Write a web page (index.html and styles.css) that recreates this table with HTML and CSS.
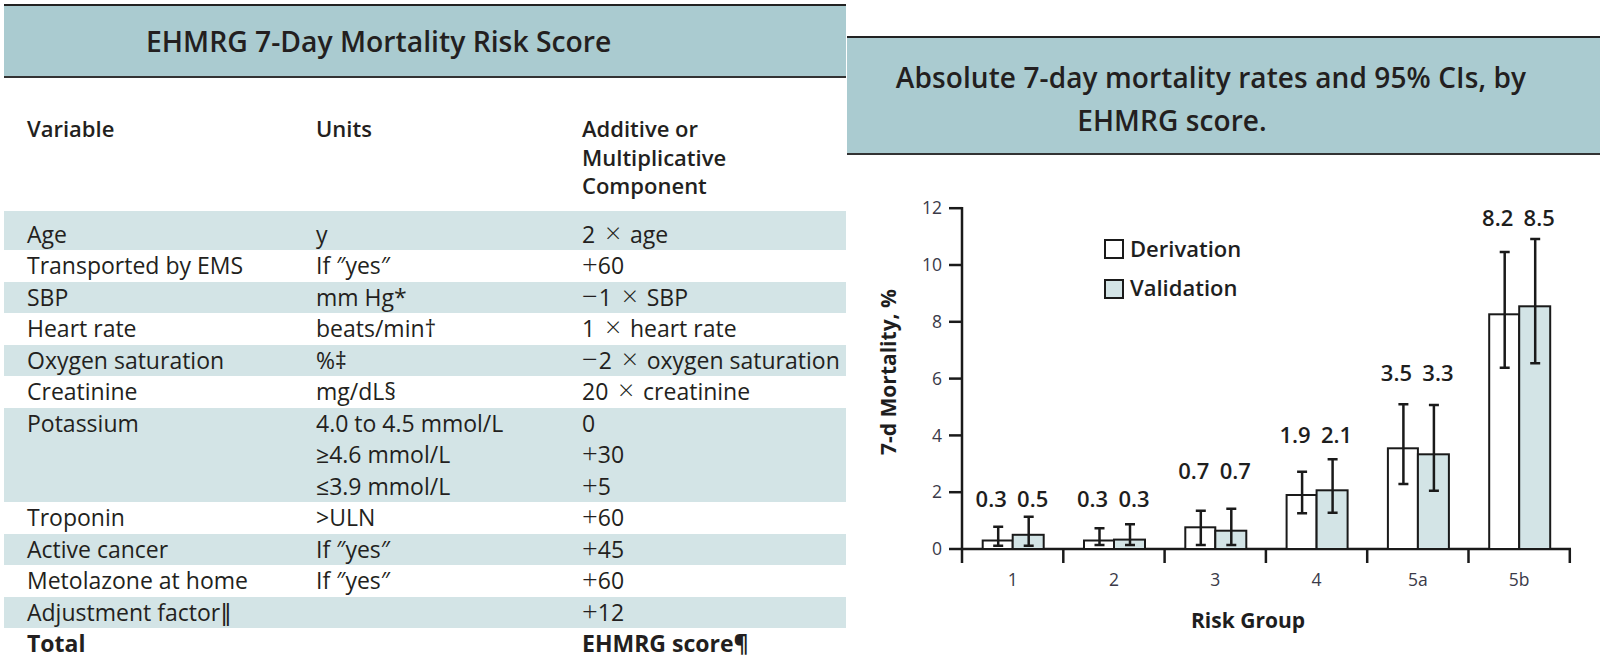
FILE: index.html
```html
<!DOCTYPE html>
<html lang="en">
<head>
<meta charset="utf-8">
<title>EHMRG 7-Day Mortality Risk Score</title>
<link rel="stylesheet" href="styles.css">
</head>
<body>
<div class="page">
  <section class="score">
    <h1 class="score-title">EHMRG 7-Day Mortality Risk Score</h1>
    <div class="row head"><div>Variable</div><div>Units</div><div>Additive or<br>Multiplicative<br>Component</div></div>
    <div class="row alt first"><div>Age</div><div>y</div><div>2<span class="op x">×</span>age</div></div>
    <div class="row"><div>Transported by EMS</div><div>If ″yes″</div><div><span class="op">+</span>60</div></div>
    <div class="row alt"><div>SBP</div><div>mm Hg*</div><div><span class="op m">−</span>1<span class="op x">×</span>SBP</div></div>
    <div class="row"><div>Heart rate</div><div>beats/min†</div><div>1<span class="op x">×</span>heart rate</div></div>
    <div class="row alt"><div>Oxygen saturation</div><div>%‡</div><div><span class="op m">−</span>2<span class="op x">×</span>oxygen saturation</div></div>
    <div class="row"><div>Creatinine</div><div>mg/dL§</div><div>20<span class="op x">×</span>creatinine</div></div>
    <div class="row alt"><div>Potassium</div><div>4.0 to 4.5 mmol/L<br>≥4.6 mmol/L<br>≤3.9 mmol/L</div><div>0<br><span class="op">+</span>30<br><span class="op">+</span>5</div></div>
    <div class="row"><div>Troponin</div><div>&gt;ULN</div><div><span class="op">+</span>60</div></div>
    <div class="row alt"><div>Active cancer</div><div>If ″yes″</div><div><span class="op">+</span>45</div></div>
    <div class="row"><div>Metolazone at home</div><div>If ″yes″</div><div><span class="op">+</span>60</div></div>
    <div class="row alt"><div>Adjustment factor‖</div><div></div><div><span class="op">+</span>12</div></div>
    <div class="row total"><div>Total</div><div></div><div>EHMRG score¶</div></div>
  </section>

  <section class="chart-panel">
    <h2 class="chart-title"><span class="l1">Absolute 7-day mortality rates and 95% CIs, by</span><span class="l2">EHMRG score.</span></h2>
    <svg class="chart" width="753" height="512" viewBox="847 155 753 512" xmlns="http://www.w3.org/2000/svg">
      <g class="axis">
        <line x1="962" y1="207" x2="962" y2="563"/>
        <line x1="961" y1="549" x2="1571" y2="549"/>
        <line x1="949" y1="549" x2="962" y2="549"/>
        <line x1="949" y1="492.2" x2="962" y2="492.2"/>
        <line x1="949" y1="435.4" x2="962" y2="435.4"/>
        <line x1="949" y1="378.6" x2="962" y2="378.6"/>
        <line x1="949" y1="321.8" x2="962" y2="321.8"/>
        <line x1="949" y1="265" x2="962" y2="265"/>
        <line x1="949" y1="208.2" x2="962" y2="208.2"/>
        <line x1="1063.3" y1="549" x2="1063.3" y2="563"/>
        <line x1="1164.6" y1="549" x2="1164.6" y2="563"/>
        <line x1="1265.9" y1="549" x2="1265.9" y2="563"/>
        <line x1="1367.2" y1="549" x2="1367.2" y2="563"/>
        <line x1="1468.5" y1="549" x2="1468.5" y2="563"/>
        <line x1="1569.8" y1="549" x2="1569.8" y2="563"/>
      </g>
      <g class="tick" text-anchor="end">
        <text x="942" y="555.2">0</text>
        <text x="942" y="498.4">2</text>
        <text x="942" y="441.6">4</text>
        <text x="942" y="384.8">6</text>
        <text x="942" y="328">8</text>
        <text x="942" y="271.2">10</text>
        <text x="942" y="214.4">12</text>
      </g>
      <g class="tick" text-anchor="middle">
        <text x="1012.7" y="586">1</text>
        <text x="1114" y="586">2</text>
        <text x="1215.3" y="586">3</text>
        <text x="1316.6" y="586">4</text>
        <text x="1417.9" y="586">5a</text>
        <text x="1519.2" y="586">5b</text>
      </g>

      <g class="bars">
        <rect class="d" x="982.7" y="540.5" width="30" height="8.5"/>
        <rect class="v" x="1012.7" y="534.8" width="31" height="14.2"/>
        <rect class="d" x="1084" y="540.5" width="30" height="8.5"/>
        <rect class="v" x="1114" y="539.6" width="31" height="9.4"/>
        <rect class="d" x="1185.3" y="527.3" width="30" height="21.7"/>
        <rect class="v" x="1215.3" y="530.7" width="31" height="18.3"/>
        <rect class="d" x="1286.6" y="495" width="30" height="54"/>
        <rect class="v" x="1316.6" y="490.3" width="31" height="58.7"/>
        <rect class="d" x="1387.9" y="448.3" width="30" height="100.7"/>
        <rect class="v" x="1417.9" y="454.3" width="31" height="94.7"/>
        <rect class="d" x="1489.2" y="314.3" width="30" height="234.7"/>
        <rect class="v" x="1519.2" y="306.3" width="31" height="242.7"/>
      </g>

      <g class="err">
        <path d="M998.2 526.7V545.7M993.2 526.7H1003.2M993.2 545.7H1003.2"/>
        <path d="M1028.7 516.7V545.7M1023.7 516.7H1033.7M1023.7 545.7H1033.7"/>
        <path d="M1099.5 528.3V545M1094.5 528.3H1104.5M1094.5 545H1104.5"/>
        <path d="M1130 524.3V545M1125 524.3H1135M1125 545H1135"/>
        <path d="M1200.8 510.7V545M1195.8 510.7H1205.8M1195.8 545H1205.8"/>
        <path d="M1231.3 508.7V545M1226.3 508.7H1236.3M1226.3 545H1236.3"/>
        <path d="M1302.1 471.7V513.3M1297.1 471.7H1307.1M1297.1 513.3H1307.1"/>
        <path d="M1332.6 459.3V512.7M1327.6 459.3H1337.6M1327.6 512.7H1337.6"/>
        <path d="M1403.4 404.3V484M1398.4 404.3H1408.4M1398.4 484H1408.4"/>
        <path d="M1433.9 405V490.7M1428.9 405H1438.9M1428.9 490.7H1438.9"/>
        <path d="M1504.7 252V367.7M1499.7 252H1509.7M1499.7 367.7H1509.7"/>
        <path d="M1535.2 239V363.3M1530.2 239H1540.2M1530.2 363.3H1540.2"/>
      </g>

      <g class="val" text-anchor="middle">
        <text x="991.2" y="506.5">0.3</text><text x="1032.7" y="506.5">0.5</text>
        <text x="1092.5" y="506.5">0.3</text><text x="1134" y="506.5">0.3</text>
        <text x="1193.8" y="479.2">0.7</text><text x="1235.3" y="479.2">0.7</text>
        <text x="1295.1" y="442.5">1.9</text><text x="1336.6" y="442.5">2.1</text>
        <text x="1396.4" y="380.8">3.5</text><text x="1437.9" y="380.8">3.3</text>
        <text x="1497.7" y="225.8">8.2</text><text x="1539.2" y="225.8">8.5</text>
      </g>

      <g class="legend">
        <rect class="d" x="1105" y="240" width="18" height="18"/>
        <text x="1130" y="256.7">Derivation</text>
        <rect class="v" x="1105" y="280" width="18" height="18"/>
        <text x="1130" y="296">Validation</text>
      </g>

      <text class="axis-title" text-anchor="middle" transform="translate(896 372) rotate(-90)">7-d Mortality, %</text>
      <text class="axis-title" x="1248" y="628.3" text-anchor="middle">Risk Group</text>
    </svg>
  </section>
</div>
</body>
</html>
```

FILE: styles.css
```css
html, body {
  margin: 0;
  padding: 0;
  background: #ffffff;
}

body {
  font-family: "Open Sans", "DejaVu Sans", sans-serif;
  color: #231f20;
}

.page {
  display: flex;
  align-items: flex-start;
}

.score {
  width: 842px;
  margin: 4px 0 0 4px;
}

.score-title {
  margin: 0;
  height: 70px;
  line-height: 70px;
  padding-left: 142px;
  background: #aacbd0;
  border-top: 2px solid #222;
  border-bottom: 2px solid #333;
  font-size: 28.3px;
  font-weight: 600;
  color: #231f20;
}

.row {
  display: grid;
  grid-template-columns: 289px 266px 1fr;
  padding-left: 23px;
  font-size: 23px;
  line-height: 31.5px;
  white-space: nowrap;
}

.row .op {
  font-size: 1.2em;
  font-weight: 300;
  line-height: 0;
}

.row .op.x {
  margin: 0 9px 0 10px;
}

.row .op.m {
  margin-right: 1px;
}

.row.head {
  font-size: 22px;
  font-weight: 600;
  line-height: 28.3px;
  padding-top: 36.4px;
  padding-bottom: 11.4px;
}

.row.alt {
  background: #d3e4e6;
}

.row.first {
  padding-top: 8px;
}

.row.total {
  font-weight: 700;
}

.chart-panel {
  flex: 1;
  margin: 36px 0 0 1px;
}

.chart-title {
  margin: 0;
  height: 97px;
  padding-top: 18px;
  background: #aacbd0;
  border-top: 2px solid #222;
  border-bottom: 2px solid #333;
  text-align: center;
  font-size: 28px;
  font-weight: 600;
  letter-spacing: 0.1px;
  line-height: 42.5px;
  color: #231f20;
}

.chart-title .l1,
.chart-title .l2 {
  display: block;
}

.chart-title .l1 {
  padding-right: 25px;
}

.chart-title .l2 {
  padding-right: 103px;
}

.chart {
  display: block;
}

.chart .axis line {
  stroke: #1a1a1a;
  stroke-width: 2.5;
}

.chart .tick {
  font-size: 17.5px;
  fill: #3a3a48;
}

.chart .bars rect,
.chart .legend rect {
  stroke: #1a1a1a;
  stroke-width: 2;
}

.chart .d {
  fill: #ffffff;
}

.chart .v {
  fill: #d3e4e6;
}

.chart .err path {
  stroke: #1a1a1a;
  stroke-width: 2.5;
  fill: none;
}

.chart .val {
  font-size: 22px;
  font-weight: 600;
  fill: #1e1e1e;
}

.chart .legend text {
  font-size: 22px;
  font-weight: 600;
  fill: #1e1e1e;
}

.chart .axis-title {
  font-size: 21px;
  font-weight: 700;
  fill: #1e1e1e;
}
```
